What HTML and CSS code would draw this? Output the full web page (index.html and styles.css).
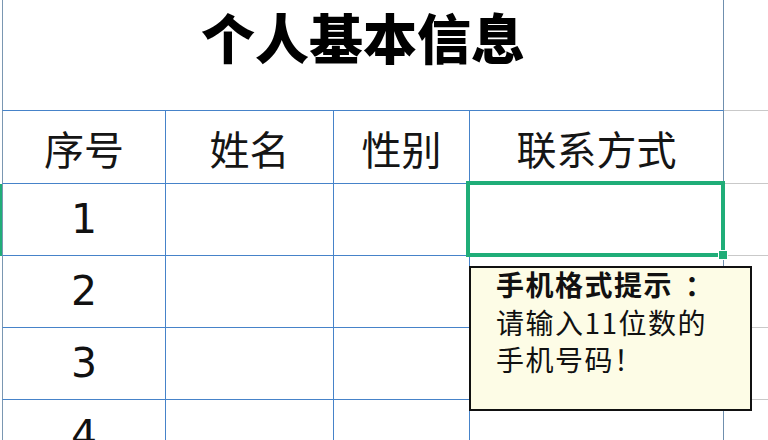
FILE: index.html
```html
<!DOCTYPE html>
<html lang="zh-CN">
<head>
<meta charset="utf-8">
<title>个人基本信息</title>
<link rel="stylesheet" href="styles.css">
</head>
<body>
<div class="sheet">
  <div class="grid">
    <div class="gut"></div>
    <div class="cell title">个人基本信息</div>
    <div class="ext"></div>

    <div class="gut"></div>
    <div class="cell hd first">序号</div>
    <div class="cell hd">姓名</div>
    <div class="cell hd">性别</div>
    <div class="cell hd last">联系方式</div>
    <div class="ext"></div>

    <div class="gut active"></div>
    <div class="cell num first">1</div>
    <div class="cell"></div>
    <div class="cell"></div>
    <div class="cell last selected"><div class="sel"><div class="handle"></div></div></div>
    <div class="ext"></div>

    <div class="gut"></div>
    <div class="cell num first">2</div>
    <div class="cell"></div>
    <div class="cell"></div>
    <div class="cell last"></div>
    <div class="ext"></div>

    <div class="gut"></div>
    <div class="cell num first">3</div>
    <div class="cell"></div>
    <div class="cell"></div>
    <div class="cell last"></div>
    <div class="ext"></div>

    <div class="gut"></div>
    <div class="cell num first">4</div>
    <div class="cell"></div>
    <div class="cell"></div>
    <div class="cell last"></div>
    <div class="ext"></div>
  </div>

  <div class="tip">
    <div class="tip-title">手机格式提示<span class="punct">：</span></div>
    <div class="tip-line">请输入11位数的</div>
    <div class="tip-line">手机号码！</div>
  </div>
</div>
</body>
</html>
```
FILE: styles.css
```css
* {
  box-sizing: border-box;
}

html, body {
  margin: 0;
  padding: 0;
  background: #ffffff;
}

body {
  font-family: "Noto Sans CJK SC", "Noto Sans", sans-serif;
  color: #111111;
}

.sheet {
  position: relative;
  width: 768px;
  height: 440px;
  overflow: hidden;
  background: #ffffff;
}

.grid {
  display: grid;
  grid-template-columns: 2px 164px 168px 136px 254px 1fr;
  grid-template-rows: 111px 73px repeat(4, 72px);
}

.gut {
  background: #ffffff;
}

.gut.active {
  background: #20ad78;
}

.cell {
  display: flex;
  align-items: center;
  justify-content: center;
  border-right: 1px solid #4683c9;
  border-bottom: 1px solid #4683c9;
}

.cell.first {
  border-left: 1px solid #7a97b2;
}

.cell.last {
  border-right: 1px solid #6f8fae;
}

.title {
  grid-column: 2 / 6;
  align-items: flex-start;
  padding-top: 0;
  border-left: 1px solid #7a97b2;
  border-right: 1px solid #6f8fae;
  font-size: 54px;
  line-height: 74px;
  font-weight: 900;
  color: #000000;
}

.ext {
  border-bottom: 1px solid #c9c9c9;
}

.hd {
  font-size: 40px;
  font-weight: 400;
  line-height: 1.3;
  padding-top: 1px;
  color: #151515;
}

.num {
  font-family: "DejaVu Sans", sans-serif;
  font-size: 41px;
  line-height: 1.2;
  color: #111111;
}

.selected {
  position: relative;
}

.sel {
  position: absolute;
  left: -4px;
  top: -3px;
  right: -2px;
  bottom: -2px;
  border: 4px solid #20ad78;
}

.handle {
  position: absolute;
  right: -7px;
  bottom: -7px;
  width: 10px;
  height: 10px;
  background: #20ad78;
  border: 1px solid #ffffff;
}

.tip {
  position: absolute;
  left: 469px;
  top: 266px;
  width: 283px;
  height: 145px;
  border: 2px solid #111111;
  background: #fdfce6;
  padding: 0 0 0 25px;
  font-size: 28px;
  line-height: 37.5px;
  letter-spacing: 1.5px;
  color: #111111;
}

.tip-title {
  margin-top: -2px;
  font-weight: 700;
}

.punct {
  margin-left: 12px;
}
```
